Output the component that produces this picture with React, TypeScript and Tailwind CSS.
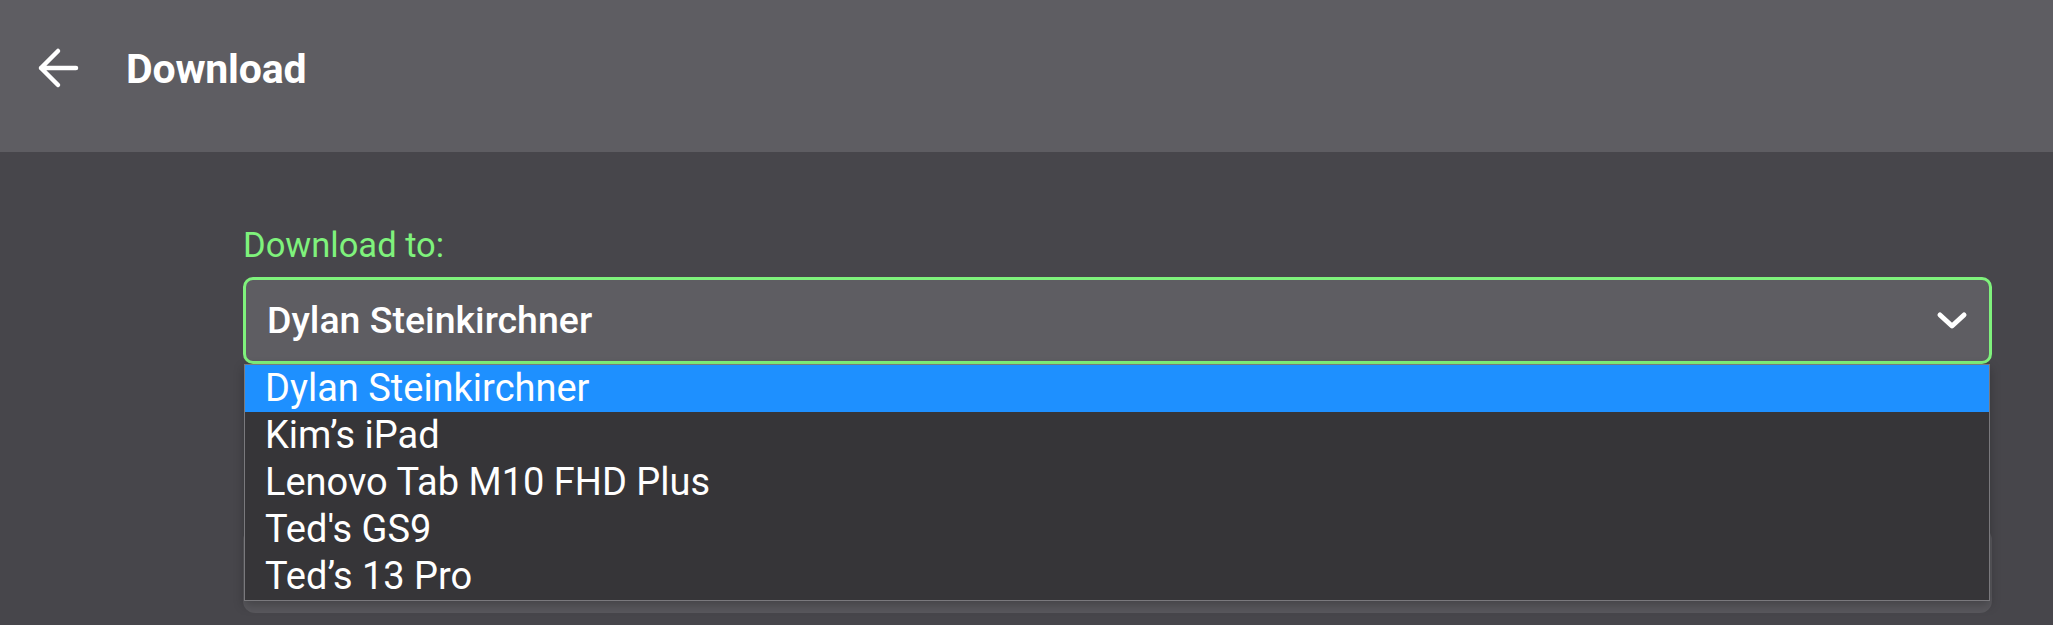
const devices = [
  "Dylan Steinkirchner",
  "Kim’s iPad",
  "Lenovo Tab M10 FHD Plus",
  "Ted's GS9",
  "Ted’s 13 Pro",
];

function BackArrow() {
  return (
    <svg width="44" height="44" viewBox="0 0 44 44" fill="none" className="block">
      <path
        d="M4 21H39M4 21L21 4M4 21L21 38"
        stroke="white"
        strokeWidth="4.5"
        strokeLinecap="round"
        strokeLinejoin="round"
      />
    </svg>
  );
}

function Chevron() {
  return (
    <svg width="34" height="22" viewBox="0 0 34 22" fill="none" className="block">
      <path
        d="M5 5L17 16L29 5"
        stroke="white"
        strokeWidth="5"
        strokeLinecap="round"
        strokeLinejoin="round"
      />
    </svg>
  );
}

export default function App() {
  const selected = 0;

  return (
    <div
      className="min-h-[625px] bg-[#47464b] text-white"
      style={{ fontFamily: "Roboto, 'Noto Sans', sans-serif" }}
    >
      <header className="h-[152px] bg-[#5e5d62]">
        <div className="flex h-[138px] items-center">
          <div className="ml-[37px] w-[44px]">
            <BackArrow />
          </div>
          <h1 className="ml-[45px] text-[41px] font-bold leading-none tracking-[-0.2px]">Download</h1>
        </div>
      </header>

      <main className="pt-[73px] pl-[243px] pr-[61px]">
        <label className="block text-[34.5px] leading-[40px] text-[#7ff27c]">Download to:</label>

        <div className="relative mt-[12px]">
          <div className="flex h-[87px] items-center justify-between rounded-[10px] border-[3px] border-[#7ff27c] bg-[#5e5d62] pl-[21px] pr-[20px]">
            <span className="text-[37.5px] font-medium leading-none">{devices[selected]}</span>
            <Chevron />
          </div>

          <ul className="absolute left-[1px] right-[2px] top-[87px] z-10 border border-[#7a797d] bg-[#363538] shadow-[0_4px_10px_rgba(0,0,0,0.25)]">
            {devices.map((d, i) => (
              <li
                key={d}
                className={`h-[47px] pl-[20px] text-[38px] leading-[47px] ${
                  i === selected ? "bg-[#1e90ff]" : ""
                }`}
              >
                {d}
              </li>
            ))}
          </ul>
        </div>

        <div className="mt-[164px] h-[85px] rounded-[12px] bg-[#59585d]" />
      </main>
    </div>
  );
}
